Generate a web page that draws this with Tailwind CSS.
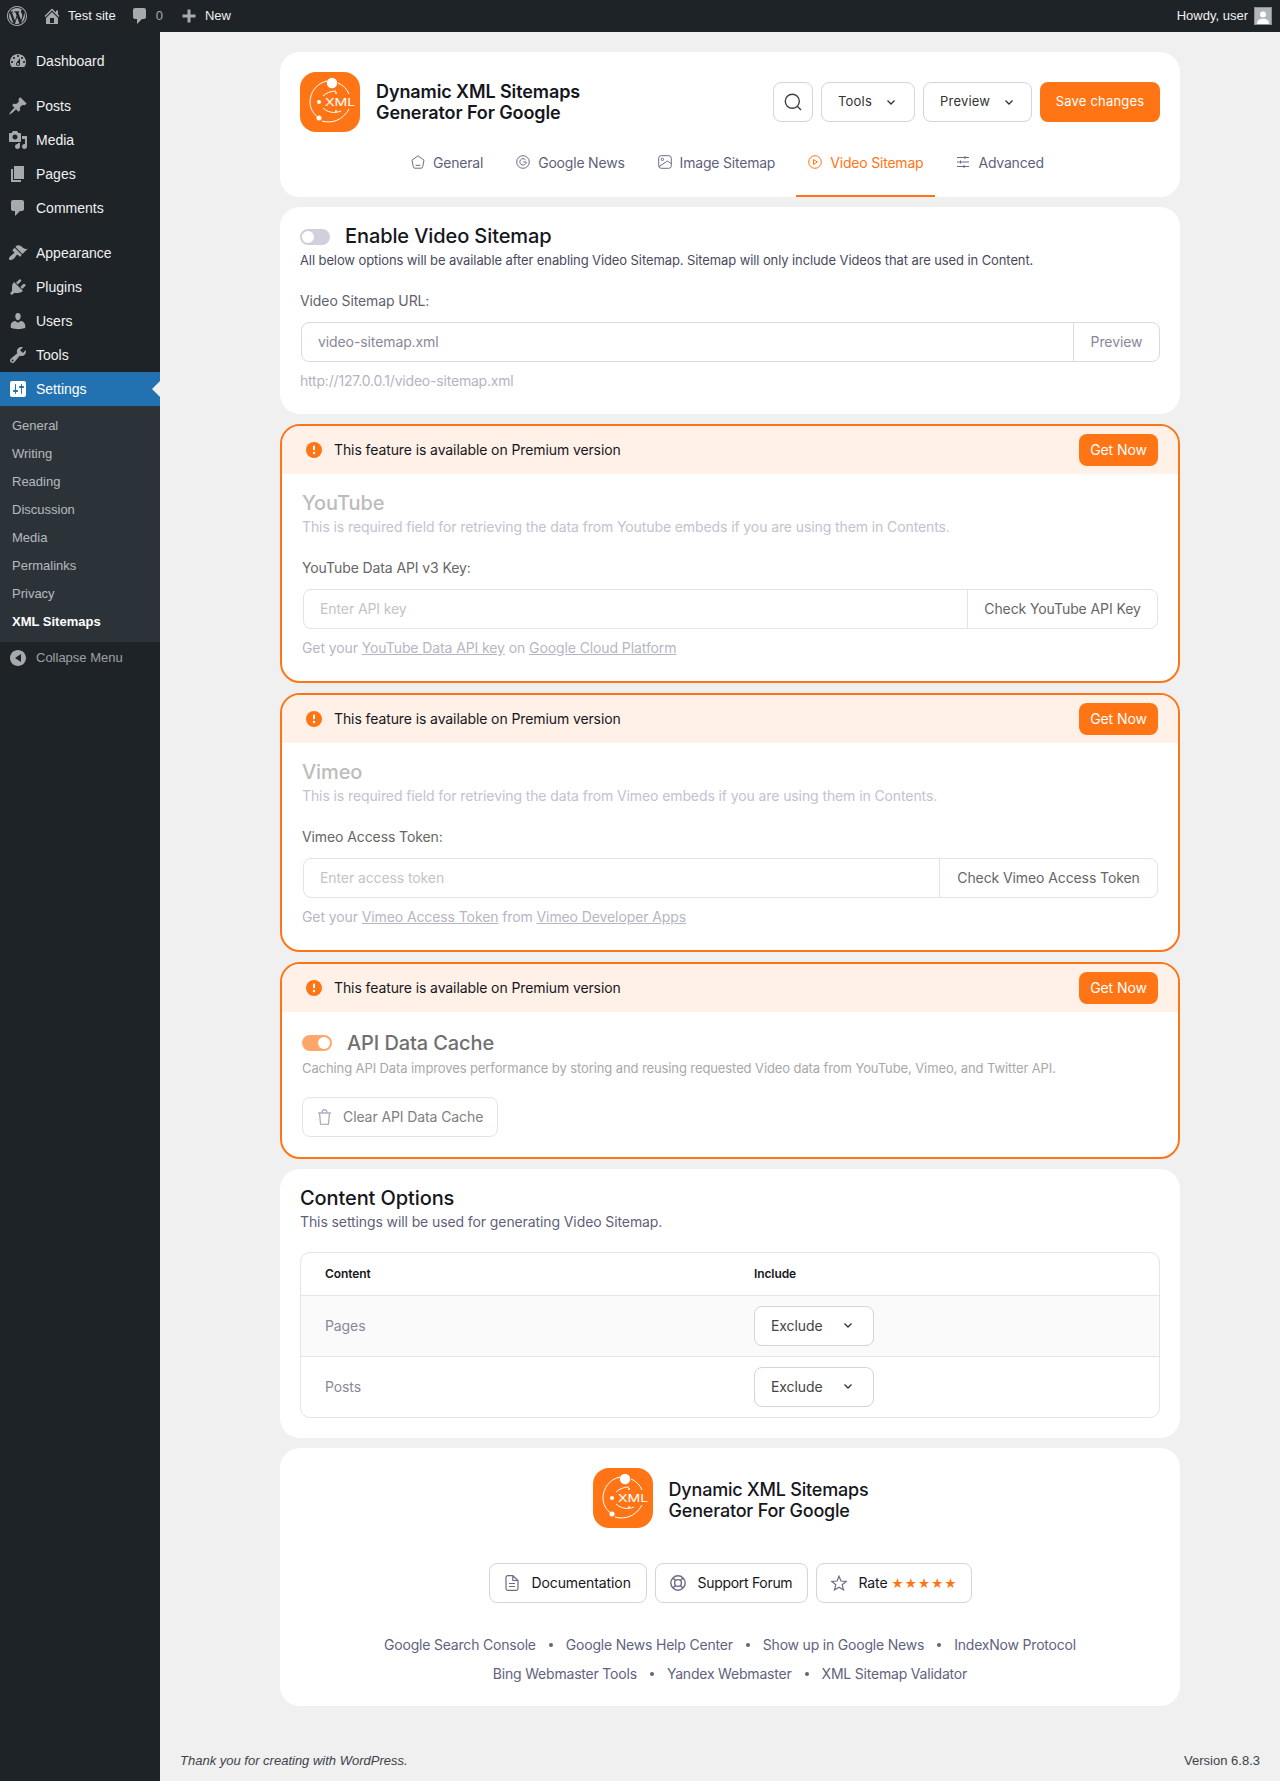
<!doctype html>
<html><head><meta charset="utf-8"><script src="https://cdn.jsdelivr.net/npm/@tailwindcss/browser@4"></script></head>
<body class="bg-[#f0f0f1] font-['Liberation_Sans',sans-serif] text-[13px]">
<div class="w-[1280px] h-[1781px] flex flex-col overflow-hidden relative">
<!-- admin bar -->
<header class="h-8 bg-[#1d2327] text-[#f0f0f1] flex items-center pl-[7px] pr-2 shrink-0">
  <svg class="w-5 h-5 fill-[#a7aaad]" viewBox="0 0 20 20"><path d="M20 10c0-5.52-4.48-10-10-10S0 4.48 0 10s4.48 10 10 10 10-4.48 10-10zM10 1.01c4.97 0 8.99 4.02 8.99 8.99s-4.02 8.99-8.99 8.99S1.01 14.97 1.01 10 5.03 1.01 10 1.01zM8.01 14.82L4.96 6.61c.49-.03 1.05-.08 1.05-.08.43-.05.38-1.01-.06-.99 0 0-1.29.1-2.13.1-.15 0-.33 0-.52-.01 1.44-2.17 3.9-3.6 6.7-3.6 2.09 0 3.99.79 5.41 2.09-.6-.08-1.45.35-1.45 1.42 0 .66.38 1.22.79 1.88.31.54.5 1.22.5 2.21 0 1.34-1.27 4.48-1.27 4.48l-2.71-7.5c.48-.03.75-.16.75-.16.43-.05.38-1.1-.05-1.08 0 0-1.3.11-2.14.11-.78 0-2.11-.11-2.11-.11-.43-.02-.48 1.06-.05 1.08l.84.08 1.12 3.04zm6.02 2.15L16.64 10s.67-1.69.39-3.81c.63 1.14.94 2.42.94 3.81 0 2.96-1.56 5.58-3.94 6.97zM2.68 6.77L6.5 17.25c-2.67-1.3-4.47-4.08-4.47-7.25 0-1.16.2-2.23.65-3.23zm7.45 4.53l2.29 6.25c-.75.27-1.57.42-2.42.42-.72 0-1.41-.11-2.06-.3z"/></svg>
  <svg class="w-5 h-5 fill-[#a7aaad] ml-[15px]" viewBox="0 0 20 20"><path d="M16 8.5l1.53 1.53-1.06 1.06L10 4.62l-6.47 6.47-1.06-1.06L10 2.5l4 4v-2h2v4zm-6-2.46l6 5.99V18H4v-5.97zM12 17v-5H8v5h4z"/></svg>
  <span class="ml-[6px]">Test site</span>
  <svg class="w-5 h-5 fill-[#a7aaad] ml-[14px]" viewBox="0 0 20 20"><path d="M5 2h9c1.1 0 2 .9 2 2v7c0 1.1-.9 2-2 2h-2l-5 5v-5H5c-1.1 0-2-.9-2-2V4c0-1.1.9-2 2-2z"/></svg>
  <span class="ml-[6px] text-[#a7aaad]">0</span>
  <svg class="w-5 h-5 fill-[#a7aaad] ml-4" viewBox="0 0 20 20"><path d="M8.500 3.500h3v5h5v3h-5v5h-3v-5h-5v-3h5z"/></svg>
  <span class="ml-[6px]">New</span>
  <span class="ml-auto mr-[6px]">Howdy, user</span>
  <span class="w-[18px] h-[18px] bg-[#b4b5b8] border border-[#8c8f94] flex items-end justify-center overflow-hidden">
    <svg class="w-[14px] h-[14px] fill-white" viewBox="0 0 16 16"><circle cx="8" cy="5" r="3.400"/><path d="M1 16c0-4 3-6 7-6s7 2 7 6z"/></svg>
  </span>
</header>
<div class="flex flex-1 min-h-0">
<!-- sidebar -->
<aside class="w-40 shrink-0 bg-[#1d2327] pt-3 text-[14px] text-[#f0f0f1]">
  <a class="h-[34px] flex items-center"><span class="w-9 pl-[8px]"><svg class="w-5 h-5 fill-[#a7aaad]" viewBox="0 0 20 20"><path d="M3.76 16h12.48c1.1-1.37 1.76-3.11 1.76-5 0-4.42-3.58-8-8-8s-8 3.58-8 8c0 1.89.66 3.63 1.76 5zM10 4c.55 0 1 .45 1 1s-.45 1-1 1-1-.45-1-1 .45-1 1-1zM6 6c.55 0 1 .45 1 1s-.45 1-1 1-1-.45-1-1 .45-1 1-1zm8 0c.55 0 1 .45 1 1s-.45 1-1 1-1-.45-1-1 .45-1 1-1zm-5.37 5.55L12 7v6c0 1.1-.9 2-2 2s-2-.9-2-2c0-.57.24-1.08.63-1.45zM4 10c.55 0 1 .45 1 1s-.45 1-1 1-1-.45-1-1 .45-1 1-1zm12 0c.55 0 1 .45 1 1s-.45 1-1 1-1-.45-1-1 .45-1 1-1zm-5 3c0-.55-.45-1-1-1s-1 .45-1 1 .45 1 1 1 1-.45 1-1z"/></svg></span>Dashboard</a>
  <a class="h-[34px] mt-[11px] flex items-center"><span class="w-9 pl-[8px]"><svg class="w-5 h-5 fill-[#a7aaad]" viewBox="0 0 20 20"><path d="M10.44 3.02l1.82-1.82 6.36 6.35-1.83 1.82c-1.05-.68-2.48-.57-3.41.36l-.75.75c-.92.93-1.04 2.35-.35 3.41l-1.83 1.82-2.41-2.41-2.8 2.79c-.42.42-3.38 2.71-3.8 2.29s1.86-3.39 2.28-3.81l2.79-2.79L4.1 9.36l1.83-1.82c1.05.69 2.48.57 3.4-.36l.75-.75c.93-.92 1.05-2.35.36-3.41z"/></svg></span>Posts</a>
  <a class="h-[34px] flex items-center"><span class="w-9 pl-[8px]"><svg class="w-5 h-5 fill-[#a7aaad]" viewBox="0 0 20 20"><path d="M13 11V4c0-.55-.45-1-1-1h-1.67L9 1H5L3.67 3H2c-.55 0-1 .45-1 1v7c0 .55.45 1 1 1h10c.55 0 1-.45 1-1zM7 4.5c1.38 0 2.5 1.12 2.5 2.5S8.38 9.5 7 9.5 4.5 8.38 4.5 7 5.62 4.5 7 4.5zM14 6h5v10.5c0 1.38-1.12 2.5-2.5 2.5S14 17.88 14 16.5s1.12-2.5 2.5-2.5c.17 0 .34.02.5.05V9h-3V6zm-4 8.05V13h2v3.5c0 1.38-1.12 2.5-2.5 2.5S7 17.88 7 16.5 8.12 14 9.5 14c.17 0 .34.02.5.05z"/></svg></span>Media</a>
  <a class="h-[34px] flex items-center"><span class="w-9 pl-[8px]"><svg class="w-5 h-5 fill-[#a7aaad]" viewBox="0 0 20 20"><path d="M6 15V2h10v13H6zm-1 1h8v2H3V5h2v11z"/></svg></span>Pages</a>
  <a class="h-[34px] flex items-center"><span class="w-9 pl-[8px]"><svg class="w-5 h-5 fill-[#a7aaad]" viewBox="0 0 20 20"><path d="M5 2h9c1.1 0 2 .9 2 2v7c0 1.1-.9 2-2 2h-2l-5 5v-5H5c-1.1 0-2-.9-2-2V4c0-1.1.9-2 2-2z"/></svg></span>Comments</a>
  <a class="h-[34px] mt-[11px] flex items-center"><span class="w-9 pl-[8px]"><svg class="w-5 h-5 fill-[#a7aaad]" viewBox="0 0 20 20"><path d="M14.48 11.06L7.41 3.99l1.5-1.5c.5-.56 2.3-.47 3.51.32 1.21.8 1.43 1.28 2.91 2.1 1.18.64 2.45 1.26 4.45.85zm-.71.71L6.7 4.7 4.93 6.47c-.39.39-.39 1.02 0 1.41l1.06 1.06c.39.39.39 1.03 0 1.42-.6.6-1.43 1.11-2.21 1.69-.35.26-.7.53-1.01.84C1.43 13.23.4 15.86 1.31 16.77c.91.91 3.57-.11 4.92-1.46.3-.3.56-.65.82-1.01.58-.77 1.09-1.6 1.69-2.2.39-.39 1.02-.39 1.41 0l1.06 1.06c.39.39 1.02.39 1.41 0z"/></svg></span>Appearance</a>
  <a class="h-[34px] flex items-center"><span class="w-9 pl-[8px]"><svg class="w-5 h-5 fill-[#a7aaad]" viewBox="0 0 20 20"><path d="M13.11 4.36L9.87 7.6 8 5.73l3.24-3.24c.35-.34 1.05-.2 1.56.32.52.51.66 1.21.31 1.55zm-8 1.77l.91-1.12 9.01 9.01-1.19.84c-.71.71-2.63 1.16-3.82 1.16H6.14L4.9 17.26c-.59.59-1.54.59-2.12 0-.59-.58-.59-1.53 0-2.12l1.24-1.24v-3.88c0-1.13.4-3.19 1.09-3.89zm7.26 3.97l3.24-3.24c.34-.35 1.04-.21 1.55.31.52.51.66 1.21.31 1.55l-3.24 3.25z"/></svg></span>Plugins</a>
  <a class="h-[34px] flex items-center"><span class="w-9 pl-[8px]"><svg class="w-5 h-5 fill-[#a7aaad]" viewBox="0 0 20 20"><path d="M10 9.25c-2.27 0-2.73-3.44-2.73-3.44C7 4.02 7.82 2 9.97 2c2.16 0 2.98 2.02 2.71 3.81 0 0-.41 3.44-2.68 3.44zm0 2.57L12.72 10c2.39 0 4.52 2.33 4.52 4.53v2.49s-3.65 1.13-7.24 1.13c-3.65 0-7.24-1.13-7.24-1.13v-2.49c0-2.25 1.94-4.48 4.47-4.48z"/></svg></span>Users</a>
  <a class="h-[34px] flex items-center"><span class="w-9 pl-[8px]"><svg class="w-5 h-5 fill-[#a7aaad]" viewBox="0 0 20 20"><path d="M16.68 9.77c-1.34 1.34-3.3 1.67-4.95.99l-5.41 6.52c-.99.99-2.59.99-3.58 0s-.99-2.59 0-3.57l6.52-5.42c-.68-1.65-.35-3.61.99-4.95 1.28-1.28 3.12-1.62 4.72-1.06l-2.89 2.89 2.82 2.82 2.86-2.87c.53 1.58.18 3.39-1.08 4.65zM3.81 16.21c.4.39 1.04.39 1.43 0 .4-.4.4-1.04 0-1.43-.39-.4-1.03-.4-1.43 0-.39.39-.39 1.03 0 1.43z"/></svg></span>Tools</a>
  <a class="h-[34px] flex items-center bg-[#2271b1] text-white relative"><span class="w-9 pl-[8px]"><svg class="w-5 h-5 fill-white" viewBox="0 0 20 20"><path d="M18 16V4c0-1.1-.9-2-2-2H4c-1.1 0-2 .9-2 2v12c0 1.1.9 2 2 2h12c1.1 0 2-.9 2-2zM8 11h1c.55 0 1 .45 1 1s-.45 1-1 1H8v1.5c0 .28-.22.5-.5.5s-.5-.22-.5-.5V13H6c-.55 0-1-.45-1-1s.45-1 1-1h1V5.5c0-.28.22-.5.5-.5s.5.22.5.5V11zm5-2h-1c-.55 0-1-.45-1-1s.45-1 1-1h1V5.5c0-.28.22-.5.5-.5s.5.22.5.5V7h1c.55 0 1 .45 1 1s-.45 1-1 1h-1v5.5c0 .28-.22.5-.5.5s-.5-.22-.5-.5V9z"/></svg></span>Settings
    <span class="absolute right-0 top-[9px] border-y-8 border-r-8 border-y-transparent border-r-[#f0f0f1]"></span></a>
  <nav class="bg-[#2c3338] pt-[6px] pb-[6px] text-[13px] text-[#f0f6fc]/70">
    <a class="h-7 pl-3 flex items-center">General</a>
    <a class="h-7 pl-3 flex items-center">Writing</a>
    <a class="h-7 pl-3 flex items-center">Reading</a>
    <a class="h-7 pl-3 flex items-center">Discussion</a>
    <a class="h-7 pl-3 flex items-center">Media</a>
    <a class="h-7 pl-3 flex items-center">Permalinks</a>
    <a class="h-7 pl-3 flex items-center">Privacy</a>
    <a class="h-7 pl-3 flex items-center font-bold text-white">XML Sitemaps</a>
  </nav>
  <a class="h-[32px] flex items-center text-[13px] text-[#f0f6fc]/60"><span class="w-9 pl-[8px]"><svg class="w-5 h-5 fill-[#a7aaad]" viewBox="0 0 20 20"><path d="M18 10c0-4.42-3.58-8-8-8s-8 3.58-8 8 3.58 8 8 8 8-3.58 8-8zm-5-4v8l-6-4z"/></svg></span>Collapse Menu</a>
</aside>
<!-- main -->
<main class="flex-1 flex flex-col pl-5 font-['Inter',sans-serif] min-w-0">
  <div class="w-[900px] mx-auto pt-5 flex flex-col gap-[10px] text-[#5f5f7c] text-[14px] tracking-[-0.1px]">
    <!-- header card -->
    <section class="bg-white rounded-[20px] h-[145px] px-5 pt-5 flex flex-col">
      <div class="flex items-center h-[60px]">
        <svg class="w-[60px] h-[60px] shrink-0" viewBox="0 0 60 60"><rect width="60" height="60" rx="16" fill="#ff7515"/><g fill="none" stroke="#fff" stroke-width="1"><path d="M27 9C17 11 10 20 10 30c0 6 3 12 8 15"/><path d="M38 11c5 2 9 6 11 11"/><path d="M22 49c10 3 21-1 27-12"/><path d="M23 24c3-3 8-5 13-5"/><path d="M23 36c4 4 11 6 18 3"/></g><circle cx="32" cy="11" r="5.200" fill="#fff"/><circle cx="19" cy="30" r="2" fill="#fff"/><circle cx="19" cy="46" r="2.500" fill="#fff"/><circle cx="36" cy="21" r="1" fill="#fff"/><circle cx="36" cy="39" r="1" fill="#fff"/><text x="25" y="34" font-family="Inter" font-size="10.500" font-weight="400" fill="#fff" textLength="30" lengthAdjust="spacingAndGlyphs">XML</text></svg>
        <h1 class="ml-4 text-[18px] leading-[21px] font-semibold text-[#16161d]">Dynamic XML Sitemaps<br>Generator For Google</h1>
        <div class="ml-auto flex items-center gap-2 text-[13px] text-[#333] tracking-[0.2px]">
          <button class="w-10 h-10 rounded-lg border border-[#d4d4de] flex items-center justify-center"><svg class="w-[18px] h-[18px]" viewBox="0 0 18 18" fill="none" stroke="#3f3f46" stroke-width="1.400"><circle cx="8.300" cy="8.300" r="7"/><path d="M13.500 13.500 17 17"/></svg></button>
          <button class="h-10 w-[94px] rounded-lg border border-[#d4d4de] flex items-center pl-4 gap-[15px]">Tools<svg class="w-2 h-[5px]" viewBox="0 0 8 5" fill="none" stroke="#333" stroke-width="1.300"><path d="M.5.5 4 4 7.500.5"/></svg></button>
          <button class="h-10 w-[109px] rounded-lg border border-[#d4d4de] flex items-center pl-4 gap-[15px]">Preview<svg class="w-2 h-[5px]" viewBox="0 0 8 5" fill="none" stroke="#333" stroke-width="1.300"><path d="M.5.5 4 4 7.500.5"/></svg></button>
          <button class="h-10 w-[120px] rounded-lg bg-[#ff7515] text-white flex items-center justify-center">Save changes</button>
        </div>
      </div>
      <nav class="mt-[11px] ml-[99px] flex h-[54px] gap-[9px] text-[14px] tracking-[-0.2px]">
        <a class="px-3 pb-4 flex items-center gap-2"><svg class="w-[14px] h-[14px]" viewBox="0 0 14 14" fill="none" stroke="#6b6b88" stroke-width="1"><path d="M7 .8 13 5.200l-1.300 6.600c-.1.8-.8 1.400-1.600 1.400H3.900c-.8 0-1.500-.6-1.600-1.400L1 5.200zM4.600 10.300h4.800"/></svg>General</a>
        <a class="px-3 pb-4 flex items-center gap-2"><svg class="w-[14px] h-[14px]" viewBox="0 0 14 14" fill="none" stroke="#6b6b88" stroke-width="1"><circle cx="7" cy="7" r="6.300"/><path d="M9.600 5A3.200 3.200 0 1 0 10.200 7H7.200"/></svg>Google News</a>
        <a class="px-3 pb-4 flex items-center gap-2"><svg class="w-[14px] h-[14px]" viewBox="0 0 14 14" fill="none" stroke="#6b6b88" stroke-width="1"><rect x=".7" y=".7" width="12.600" height="12.600" rx="2.500"/><circle cx="4.400" cy="4.400" r="1.200"/><path d="M1 11.500 9.500 6l3.800 2.800"/></svg>Image Sitemap</a>
        <a class="px-3 pb-[14px] flex items-center gap-2 text-[#ff7515] border-b-2 border-[#ff7515]"><svg class="w-[14px] h-[14px]" viewBox="0 0 14 14" fill="none" stroke="#ff7515" stroke-width="1"><circle cx="7" cy="7" r="6.300"/><path d="M5.500 4.600v4.800L9.300 7z"/></svg>Video Sitemap</a>
        <a class="px-3 pb-4 flex items-center gap-2"><svg class="w-[14px] h-[14px]" viewBox="0 0 14 14" fill="none" stroke="#6b6b88" stroke-width="1"><path d="M1 2.500h12M1 7h12M1 11.500h12M9 1v3M4.500 5.500v3M8 10v3"/></svg>Advanced</a>
      </nav>
    </section>
    <!-- enable card -->
    <section class="bg-white rounded-[20px] h-[207px] px-5 pt-5">
      <div class="flex items-center h-[18px]">
        <span class="w-[30px] h-4 mt-[2px] rounded-full bg-[#d0d0dc] flex items-center pl-[2px]"><span class="w-3 h-3 rounded-full bg-white"></span></span>
        <h2 class="ml-[15px] text-[20px] font-medium text-[#16161d]">Enable Video Sitemap</h2>
      </div>
      <p class="mt-[5px] text-[13px] leading-5 text-[#4a4a5e]">All below options will be available after enabling Video Sitemap. Sitemap will only include Videos that are used in Content.</p>
      <p class="mt-[21px] leading-5 text-[#62626f]">Video Sitemap URL:</p>
      <div class="mt-[11px] ml-px h-10 flex border border-[#dadae2] rounded-lg text-[#888899]">
        <span class="flex-1 flex items-center pl-4 pb-[2px]">video-sitemap.xml</span>
        <span class="w-[86px] border-l border-[#dadae2] flex items-center justify-center pb-[2px]">Preview</span>
      </div>
      <p class="mt-[9px] leading-5 text-[#b4b4c2] tracking-[-0.2px]">http://127.0.0.1/video-sitemap.xml</p>
    </section>
    <!-- youtube -->
    <section class="bg-white rounded-[20px] border-2 border-[#ff7515] h-[259px] overflow-hidden">
      <div class="h-12 bg-[#fff0e8] flex items-center pl-[24px] pr-[20px] text-[#16161d]">
        <svg class="w-4 h-4" viewBox="0 0 16 16"><circle cx="8" cy="8" r="8" fill="#ff7515"/><rect x="7" y="3.600" width="2" height="4.600" rx=".8" fill="#fff"/><circle cx="8" cy="11" r="1.200" fill="#fff"/></svg>
        <span class="ml-3 pb-[2px]">This feature is available on Premium version</span>
        <span class="ml-auto w-[79px] h-8 pb-[2px] rounded-lg bg-[#ff7515] text-white flex items-center justify-center">Get Now</span>
      </div>
      <div class="px-5">
        <h2 class="mt-[17px] text-[20px] leading-6 font-medium text-[#bcbcbc]">YouTube</h2>
        <p class="mt-[2px] leading-5 text-[#c2c2d0]">This is required field for retrieving the data from Youtube embeds if you are using them in Contents.</p>
        <p class="mt-[21px] leading-5 text-[#666]">YouTube Data API v3 Key:</p>
        <div class="mt-[11px] ml-px h-10 flex border border-[#e2e2ea] rounded-lg text-[#c4c4c4]">
          <span class="flex-1 flex items-center pl-4 pb-[2px]">Enter API key</span>
          <span class="w-[190px] border-l border-[#e2e2ea] flex items-center justify-center pb-[2px] text-[#666]">Check YouTube API Key</span>
        </div>
        <p class="mt-[9px] leading-5 text-[#b6b6c4]">Get your <u>YouTube Data API key</u> on <u>Google Cloud Platform</u></p>
      </div>
    </section>
    <!-- vimeo -->
    <section class="bg-white rounded-[20px] border-2 border-[#ff7515] h-[259px] overflow-hidden">
      <div class="h-12 bg-[#fff0e8] flex items-center pl-[24px] pr-[20px] text-[#16161d]">
        <svg class="w-4 h-4" viewBox="0 0 16 16"><circle cx="8" cy="8" r="8" fill="#ff7515"/><rect x="7" y="3.600" width="2" height="4.600" rx=".8" fill="#fff"/><circle cx="8" cy="11" r="1.200" fill="#fff"/></svg>
        <span class="ml-3 pb-[2px]">This feature is available on Premium version</span>
        <span class="ml-auto w-[79px] h-8 pb-[2px] rounded-lg bg-[#ff7515] text-white flex items-center justify-center">Get Now</span>
      </div>
      <div class="px-5">
        <h2 class="mt-[17px] text-[20px] leading-6 font-medium text-[#bcbcbc]">Vimeo</h2>
        <p class="mt-[2px] leading-5 text-[#c2c2d0]">This is required field for retrieving the data from Vimeo embeds if you are using them in Contents.</p>
        <p class="mt-[21px] leading-5 text-[#666]">Vimeo Access Token:</p>
        <div class="mt-[11px] ml-px h-10 flex border border-[#e2e2ea] rounded-lg text-[#c4c4c4]">
          <span class="flex-1 flex items-center pl-4 pb-[2px]">Enter access token</span>
          <span class="w-[218px] border-l border-[#e2e2ea] flex items-center justify-center pb-[2px] text-[#666]">Check Vimeo Access Token</span>
        </div>
        <p class="mt-[9px] leading-5 text-[#b6b6c4]">Get your <u>Vimeo Access Token</u> from <u>Vimeo Developer Apps</u></p>
      </div>
    </section>
    <!-- cache -->
    <section class="bg-white rounded-[20px] border-2 border-[#ff7515] h-[197px] overflow-hidden">
      <div class="h-12 bg-[#fff0e8] flex items-center pl-[24px] pr-[20px] text-[#16161d]">
        <svg class="w-4 h-4" viewBox="0 0 16 16"><circle cx="8" cy="8" r="8" fill="#ff7515"/><rect x="7" y="3.600" width="2" height="4.600" rx=".8" fill="#fff"/><circle cx="8" cy="11" r="1.200" fill="#fff"/></svg>
        <span class="ml-3 pb-[2px]">This feature is available on Premium version</span>
        <span class="ml-auto w-[79px] h-8 pb-[2px] rounded-lg bg-[#ff7515] text-white flex items-center justify-center">Get Now</span>
      </div>
      <div class="px-5">
        <div class="mt-[19px] flex items-center h-6">
          <span class="w-[30px] h-4 rounded-full bg-[#ffa76b] flex items-center justify-end pr-[2px]"><span class="w-3 h-3 rounded-full bg-white"></span></span>
          <h2 class="ml-[15px] text-[20px] font-medium text-[#707070]">API Data Cache</h2>
        </div>
        <p class="mt-[3px] text-[13px] leading-5 text-[#a8a8a8]">Caching API Data improves performance by storing and reusing requested Video data from YouTube, Vimeo, and Twitter API.</p>
        <div class="mt-[19px] h-10 w-[196px] border border-[#e2e2ea] rounded-lg flex items-center pl-[14px] pb-px gap-[11px] text-[#808080]">
          <svg class="w-[15px] h-[16px]" viewBox="0 0 15 16" fill="none" stroke="#b0b0c4" stroke-width="1.400"><path d="M1 4h13M2.500 4l1 10.500c0 .6.5 1 1 1h6c.5 0 1-.4 1-1l1-10.500M5 4c0-2 1-3.400 2.500-3.400S10 2 10 4"/></svg>Clear API Data Cache
        </div>
      </div>
    </section>
    <!-- content options -->
    <section class="bg-white rounded-[20px] h-[269px] px-5 pt-[17px]">
      <h2 class="text-[20px] leading-6 font-medium text-[#16161d]">Content Options</h2>
      <p class="mt-[2px] leading-5 text-[#5f5f7c]">This settings will be used for generating Video Sitemap.</p>
      <div class="mt-5 border border-[#e4e4ea] rounded-[10px] overflow-hidden">
        <div class="h-[43px] flex items-center text-[12px] font-semibold text-[#16161d] border-b border-[#e4e4ea]"><span class="w-[453px] pl-6">Content</span><span>Include</span></div>
        <div class="h-[61px] flex items-center bg-[#fafafa] border-b border-[#e4e4ea] text-[#888899]"><span class="w-[453px] pl-6 pb-[2px]">Pages</span>
          <span class="w-[120px] h-10 bg-white border border-[#d4d4de] rounded-lg flex items-center pl-4 pb-px gap-[22px] text-[#444]">Exclude<svg class="w-2 h-[5px]" viewBox="0 0 8 5" fill="none" stroke="#333" stroke-width="1.300"><path d="M.5.5 4 4 7.500.5"/></svg></span></div>
        <div class="h-[60px] flex items-center text-[#888899]"><span class="w-[453px] pl-6 pb-[2px]">Posts</span>
          <span class="w-[120px] h-10 bg-white border border-[#d4d4de] rounded-lg flex items-center pl-4 pb-px gap-[22px] text-[#444]">Exclude<svg class="w-2 h-[5px]" viewBox="0 0 8 5" fill="none" stroke="#333" stroke-width="1.300"><path d="M.5.5 4 4 7.500.5"/></svg></span></div>
      </div>
    </section>
    <!-- footer card -->
    <section class="bg-white rounded-[20px] h-[258px] pt-5 flex flex-col items-center">
      <div class="flex items-center h-[60px] ml-px">
        <svg class="w-[60px] h-[60px] shrink-0" viewBox="0 0 60 60"><rect width="60" height="60" rx="16" fill="#ff7515"/><g fill="none" stroke="#fff" stroke-width="1"><path d="M27 9C17 11 10 20 10 30c0 6 3 12 8 15"/><path d="M38 11c5 2 9 6 11 11"/><path d="M22 49c10 3 21-1 27-12"/><path d="M23 24c3-3 8-5 13-5"/><path d="M23 36c4 4 11 6 18 3"/></g><circle cx="32" cy="11" r="5.200" fill="#fff"/><circle cx="19" cy="30" r="2" fill="#fff"/><circle cx="19" cy="46" r="2.500" fill="#fff"/><circle cx="36" cy="21" r="1" fill="#fff"/><circle cx="36" cy="39" r="1" fill="#fff"/><text x="25" y="34" font-family="Inter" font-size="10.500" font-weight="400" fill="#fff" textLength="30" lengthAdjust="spacingAndGlyphs">XML</text></svg>
        <h2 class="ml-4 mt-1 text-[18px] leading-[21px] font-medium text-[#16161d] tracking-[-0.2px]">Dynamic XML Sitemaps<br>Generator For Google</h2>
      </div>
      <div class="mt-[35px] flex gap-2 text-[#16161d]">
        <a class="h-10 w-[158px] border border-[#d4d4de] rounded-lg flex items-center pl-[14px] pb-px gap-[12px]"><svg class="w-4 h-4" viewBox="0 0 16 16" fill="none" stroke="#6b6b88" stroke-width="1.200"><path d="M2 2.500C2 1.400 2.800.7 3.800.7h5L14 5.500v8c0 1-.8 1.800-1.800 1.800H3.800C2.800 15.300 2 14.500 2 13.500zM8.800.7v4.800H14M5 8.500h6M5 11.500h6"/></svg>Documentation</a>
        <a class="h-10 w-[153px] border border-[#d4d4de] rounded-lg flex items-center pl-[14px] pb-px gap-[12px] tracking-[-0.3px]"><svg class="w-4 h-4" viewBox="0 0 16 16" fill="none" stroke="#6b6b88" stroke-width="1.400"><circle cx="8" cy="8" r="7.200"/><circle cx="8" cy="8" r="3.400"/><path d="m3 3 2.600 2.600M13 3l-2.600 2.600M3 13l2.600-2.600M13 13l-2.600-2.600"/></svg>Support Forum</a>
        <a class="h-10 w-[156px] border border-[#d4d4de] rounded-lg flex items-center pl-[14px] pb-px gap-[12px] whitespace-nowrap"><svg class="w-4 h-4" viewBox="0 0 16 16" fill="none" stroke="#6b6b88" stroke-width="1.200"><path d="M8 1.200 10 6l5.200.400-4 3.400 1.300 5.100L8 12.200 3.500 14.900l1.300-5.100-4-3.400L6 6z"/></svg><span>Rate <span class="text-[#ff7515] text-[12px] tracking-[0.7px]">★★★★★</span></span></a>
      </div>
      <div class="mt-[27px] flex items-center h-[29px] gap-[13px] text-[#62627f] tracking-[-0.2px]"><span>Google Search Console</span><i class="w-1 h-1 rounded-full bg-[#62627f]"></i><span>Google News Help Center</span><i class="w-1 h-1 rounded-full bg-[#62627f]"></i><span>Show up in Google News</span><i class="w-1 h-1 rounded-full bg-[#62627f]"></i><span>IndexNow Protocol</span></div>
      <div class="flex items-center h-[29px] gap-[13px] text-[#62627f] tracking-[-0.2px]"><span>Bing Webmaster Tools</span><i class="w-1 h-1 rounded-full bg-[#62627f]"></i><span>Yandex Webmaster</span><i class="w-1 h-1 rounded-full bg-[#62627f]"></i><span>XML Sitemap Validator</span></div>
    </section>
  </div>
  <footer class="mt-auto h-[59px] pr-5 flex justify-between items-start pt-[29px] font-['Liberation_Sans',sans-serif] text-[13px] text-[#3c434a]"><em>Thank you for creating with WordPress.</em><span>Version 6.8.3</span></footer>
</main>
</div>
</div>
</body></html>
